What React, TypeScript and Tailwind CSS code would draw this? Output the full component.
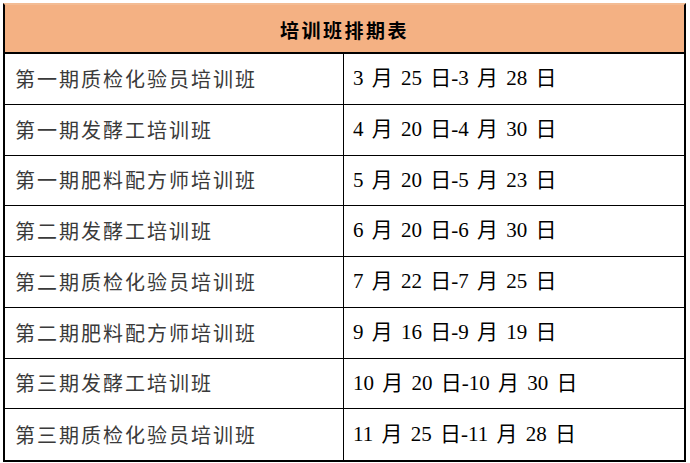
const rows = [
  ["第一期质检化验员培训班", "3 月 25 日-3 月 28 日"],
  ["第一期发酵工培训班", "4 月 20 日-4 月 30 日"],
  ["第一期肥料配方师培训班", "5 月 20 日-5 月 23 日"],
  ["第二期发酵工培训班", "6 月 20 日-6 月 30 日"],
  ["第二期质检化验员培训班", "7 月 22 日-7 月 25 日"],
  ["第二期肥料配方师培训班", "9 月 16 日-9 月 19 日"],
  ["第三期发酵工培训班", "10 月 20 日-10 月 30 日"],
  ["第三期质检化验员培训班", "11 月 25 日-11 月 28 日"],
];

export default function App() {
  return (
    <div className="w-[690px] h-[463px] bg-white pl-[3px] pt-[3px]">
      <div className="w-[683px] border-2 border-black border-t-[#f3bc94]">
        <div className="h-[49px] bg-[#f4b183] border-b-2 border-black flex items-center justify-center pt-[4px]">
          <span className="font-['Noto_Sans_CJK_SC',sans-serif] font-bold text-[19px] tracking-[2.5px] text-black">
            培训班排期表
          </span>
        </div>
        {rows.map((row, i) => (
          <div
            key={i}
            className={
              "grid grid-cols-[339px_1fr] h-[50.75px] " +
              (i < rows.length - 1 ? "border-b border-black" : "")
            }
          >
            <div className="border-r border-black flex items-center pl-[10px] font-['Noto_Sans_CJK_SC',sans-serif] text-[20px] tracking-[2px] text-[#3a3a3a]">
              {row[0]}
            </div>
            <div className="flex items-center pl-[9px] font-['Liberation_Serif','Noto_Sans_CJK_SC',serif] text-[21px] [word-spacing:3px] text-black">
              {row[1]}
            </div>
          </div>
        ))}
      </div>
    </div>
  );
}
